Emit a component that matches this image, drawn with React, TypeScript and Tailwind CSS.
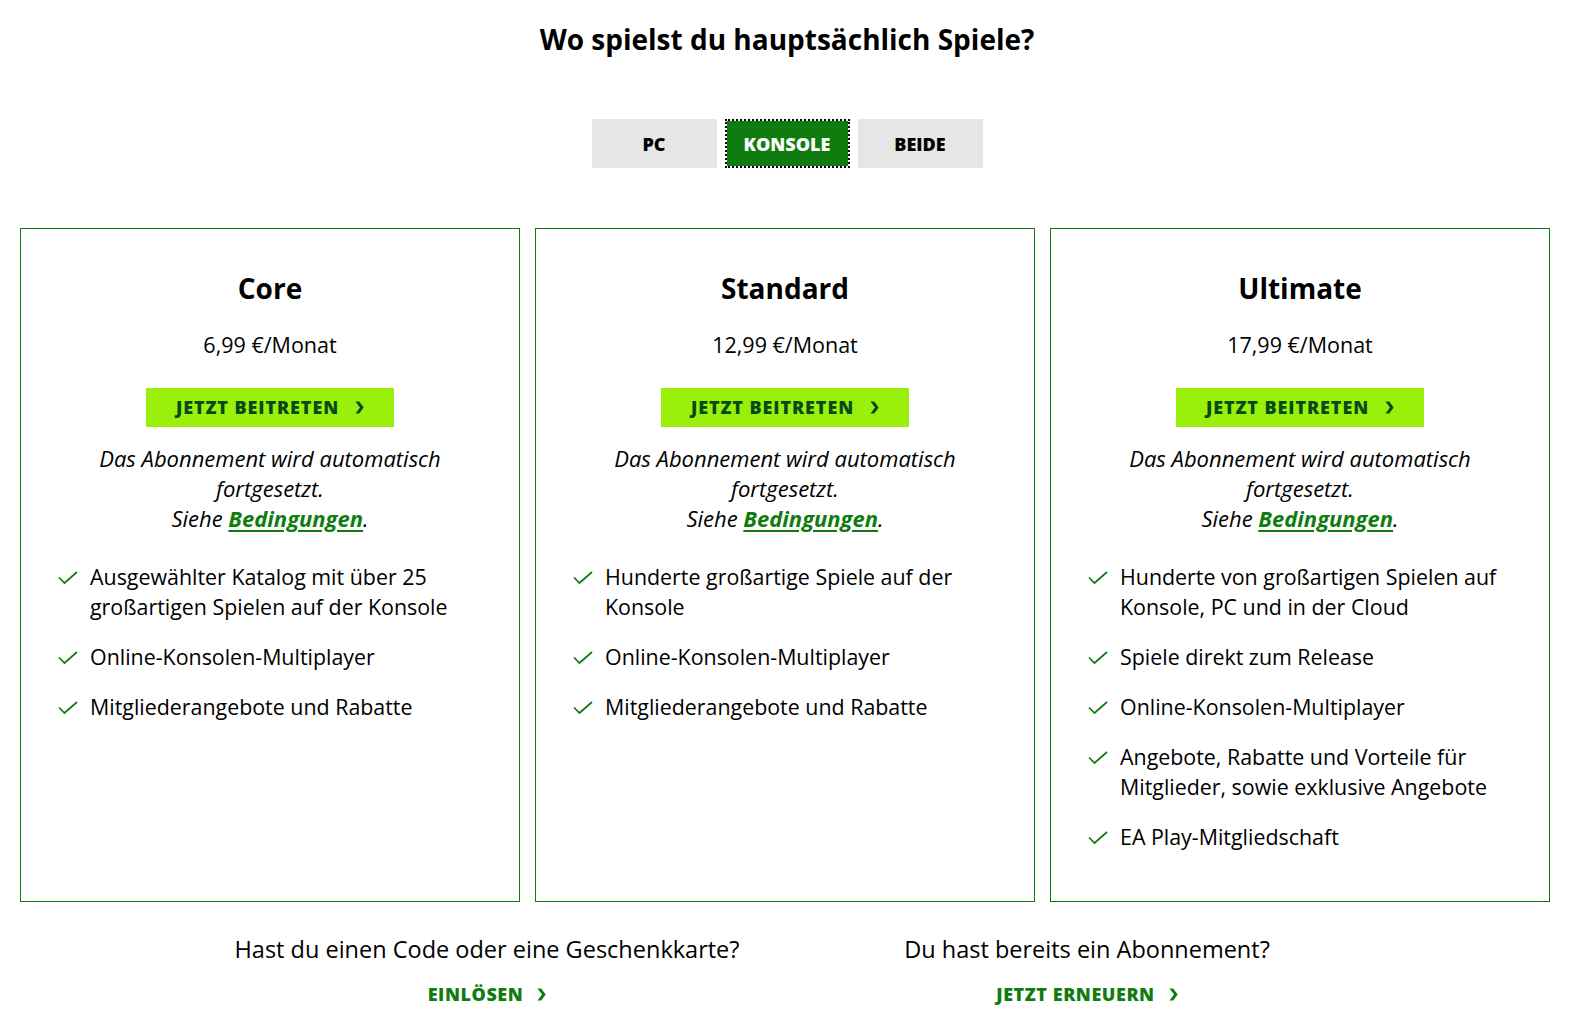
import React from "react";

const FONT = { fontFamily: '"Open Sans", "Noto Sans", sans-serif' };

const PLANS = [
  {
    name: "Core",
    price: "6,99 €/Monat",
    features: [
      "Ausgewählter Katalog mit über 25 großartigen Spielen auf der Konsole",
      "Online-Konsolen-Multiplayer",
      "Mitgliederangebote und Rabatte",
    ],
  },
  {
    name: "Standard",
    price: "12,99 €/Monat",
    features: [
      "Hunderte großartige Spiele auf der Konsole",
      "Online-Konsolen-Multiplayer",
      "Mitgliederangebote und Rabatte",
    ],
  },
  {
    name: "Ultimate",
    price: "17,99 €/Monat",
    features: [
      "Hunderte von großartigen Spielen auf Konsole, PC und in der Cloud",
      "Spiele direkt zum Release",
      "Online-Konsolen-Multiplayer",
      "Angebote, Rabatte und Vorteile für Mitglieder, sowie exklusive Angebote",
      "EA Play-Mitgliedschaft",
    ],
  },
];

function Chevron({ className = "" }: { className?: string }) {
  return (
    <svg viewBox="0 0 9 13" className={className} aria-hidden>
      <path d="M0.5 0.5 H4.2 L8.7 6.5 L4.2 12.5 H0.5 L5 6.5 Z" fill="currentColor" />
    </svg>
  );
}

function Check() {
  return (
    <svg viewBox="0 0 20 14" className="w-[20px] h-[14px] shrink-0 mt-[9px] text-[#107c10]" aria-hidden>
      <path d="M1 6.5 L6.5 12 L19 1" fill="none" stroke="currentColor" strokeWidth="1.7" />
    </svg>
  );
}

function PlanCard({ plan }: { plan: (typeof PLANS)[number] }) {
  return (
    <div className="border border-[#107c10] flex flex-col items-center pt-[41px] px-[37px] h-[674px]">
      <h3 className="text-[28px] leading-[36px] font-bold text-black">{plan.name}</h3>
      <p className="mt-[24px] text-[21.5px] leading-[30px] text-black">{plan.price}</p>
      <button className="mt-[28px] w-[248px] h-[39px] bg-[#9bf00b] text-[#054b16] flex items-center justify-center gap-[16px] text-[18px] font-extrabold tracking-[0.05em]">
        JETZT BEITRETEN
        <Chevron className="w-[9px] h-[13px]" />
      </button>
      <p className="mt-[16px] italic text-[22px] leading-[30px] text-center text-black w-[380px]">
        Das Abonnement wird automatisch fortgesetzt.
        <br />
        Siehe{" "}
        <a href="#" className="font-bold text-[#107c10] underline underline-offset-[3px]">
          Bedingungen
        </a>
        .
      </p>
      <ul className="mt-[29px] self-stretch flex flex-col gap-[20px]">
        {plan.features.map((f) => (
          <li key={f} className="flex items-start gap-[12px]">
            <Check />
            <span className="text-[21.4px] leading-[30px] text-black">{f}</span>
          </li>
        ))}
      </ul>
    </div>
  );
}

export default function App() {
  return (
    <div className="min-h-[1025px] bg-white px-[20px]" style={FONT}>
      <h2 className="pt-[21px] text-center text-[28px] leading-[36px] font-bold text-black">
        Wo spielst du hauptsächlich Spiele?
      </h2>

      <div className="mt-[62px] flex justify-center gap-[8px]">
        <button className="w-[125px] h-[49px] pt-[2px] bg-[#e6e6e6] text-black text-[18px] font-extrabold">PC</button>
        <button className="w-[125px] h-[49px] pt-[2px] bg-[#107c10] text-white text-[18px] font-extrabold outline-2 outline-dotted outline-black outline-offset-[-2px] shadow-[inset_0_0_0_2px_#fff]">
          KONSOLE
        </button>
        <button className="w-[125px] h-[49px] pt-[2px] bg-[#e6e6e6] text-black text-[18px] font-extrabold">BEIDE</button>
      </div>

      <div className="mt-[60px] grid grid-cols-[500px_500px_500px] gap-[15px]">
        {PLANS.map((p) => (
          <PlanCard key={p.name} plan={p} />
        ))}
      </div>

      <div className="mt-[31px] flex justify-center">
        <div className="w-[600px] flex flex-col items-center">
          <p className="text-[23.5px] leading-[32px] text-black">Hast du einen Code oder eine Geschenkkarte?</p>
          <a href="#" className="mt-[17px] flex items-center gap-[14px] text-[18px] leading-[24px] font-extrabold tracking-[0.03em] text-[#107c10]">
            EINLÖSEN
            <Chevron className="w-[9px] h-[13px]" />
          </a>
        </div>
        <div className="w-[600px] flex flex-col items-center">
          <p className="text-[23.5px] leading-[32px] text-black">Du hast bereits ein Abonnement?</p>
          <a href="#" className="mt-[17px] flex items-center gap-[14px] text-[18px] leading-[24px] font-extrabold tracking-[0.03em] text-[#107c10]">
            JETZT ERNEUERN
            <Chevron className="w-[9px] h-[13px]" />
          </a>
        </div>
      </div>
    </div>
  );
}
